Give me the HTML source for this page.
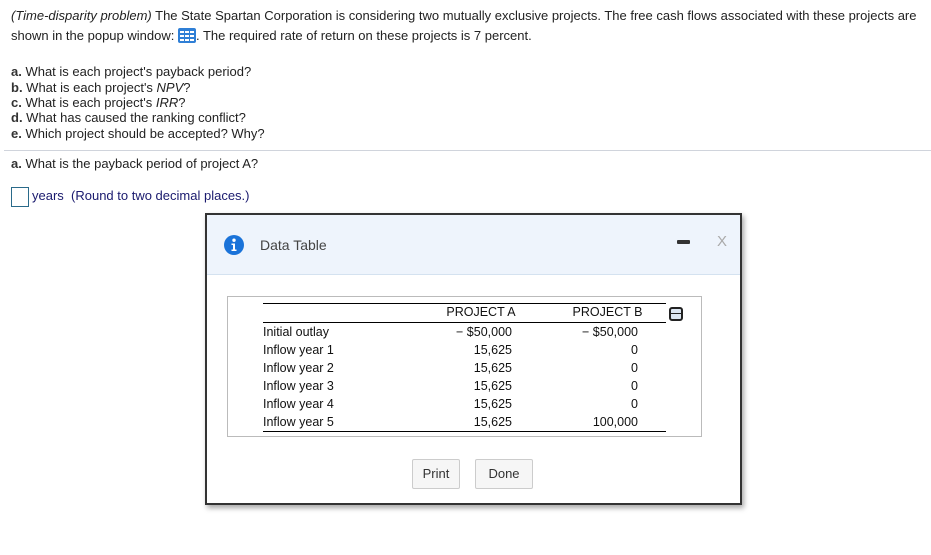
<!DOCTYPE html>
<html><head><style>
body{margin:0;width:931px;height:555px;background:#fff;font-family:"Liberation Sans",Arial,sans-serif;font-size:13px;color:#222;position:relative;overflow:hidden}
.a{position:absolute;white-space:nowrap}
b{font-weight:bold;color:#333}
.dlg{position:absolute;left:205px;top:213px;width:533px;height:288px;border:2px solid #333;background:#fff;box-shadow:2px 3px 5px rgba(0,0,0,.35)}
.hdr{position:absolute;left:0;top:0;width:533px;height:59px;background:#eef4fc;border-bottom:1px solid #d4e2f0}
.box{position:absolute;left:20px;top:81px;width:473px;height:139px;border:1px solid #bbb}
.ln{position:absolute;left:35px;width:403px;background:#000;height:1px}
.r{position:absolute;text-align:right;white-space:nowrap}
.btn{position:absolute;top:244px;height:28px;border:1px solid #ccc;border-radius:2px;background:#f6f6f6;font-size:13px;color:#333;text-align:center;line-height:28px}
</style></head><body>
<div class="a" style="left:11px;top:8px"><i>(Time-disparity problem)</i> The State Spartan Corporation is considering two mutually exclusive projects. The free cash flows associated with these projects are</div>
<div class="a" style="left:11px;top:28px">shown in the popup window: <svg width="18" height="15" viewBox="0 0 18 15" style="vertical-align:-3px"><rect x="0" y="0" width="18" height="15" rx="2" fill="#2f7fd6"/><g fill="#fff"><rect x="2" y="3" width="4" height="2"/><rect x="7" y="3" width="4" height="2"/><rect x="12" y="3" width="4" height="2"/><rect x="2" y="7" width="4" height="2"/><rect x="7" y="7" width="4" height="2"/><rect x="12" y="7" width="4" height="2"/><rect x="2" y="11" width="4" height="2"/><rect x="7" y="11" width="4" height="2"/><rect x="12" y="11" width="4" height="2"/></g></svg>. The required rate of return on these projects is 7 percent.</div>
<div class="a" style="left:11px;top:64px"><b>a.</b> What is each project's payback period?</div>
<div class="a" style="left:11px;top:80px"><b>b.</b> What is each project's <i>NPV</i>?</div>
<div class="a" style="left:11px;top:95px"><b>c.</b> What is each project's <i>IRR</i>?</div>
<div class="a" style="left:11px;top:110px"><b>d.</b> What has caused the ranking conflict?</div>
<div class="a" style="left:11px;top:126px"><b>e.</b> Which project should be accepted? Why?</div>
<div class="a" style="left:4px;top:150px;width:927px;height:1px;background:#d0d4dc"></div>
<div class="a" style="left:11px;top:156px"><b>a.</b> What is the payback period of project A?</div>
<div class="a" style="left:11px;top:187px;width:16px;height:18px;border:1px solid #2a6a8a"></div>
<div class="a" style="left:32px;top:188px;color:#1a1a6e">years &nbsp;(Round to two decimal places.)</div>
<div class="dlg">
<div class="hdr">
<svg style="position:absolute;left:17px;top:20px" width="20" height="20" viewBox="0 0 20 20"><circle cx="10" cy="10" r="10" fill="#1a73d9"/><circle cx="10" cy="5.2" r="1.7" fill="#fff"/><path d="M7.5 8.5h3.5v6h1.5v1.5h-5v-1.5h1.5v-4.5h-1.5z" fill="#fff"/></svg>
<div class="a" style="left:53px;top:22px;font-size:14px;color:#444">Data Table</div>
<div class="a" style="left:470px;top:25px;width:13px;height:4px;background:#333;border-radius:1px"></div>
<div class="a" style="left:510px;top:18px;font-size:15px;color:#aaa">X</div>
</div>
<div class="box">
<div class="ln" style="top:6px"></div>
<div class="ln" style="top:25px"></div>
<div class="ln" style="top:134px"></div>
<div class="r" style="left:208px;width:90px;top:8px;text-align:center;font-size:12.5px;color:#111">PROJECT A</div>
<div class="r" style="left:332px;width:95px;top:8px;text-align:center;font-size:12.5px;color:#111">PROJECT B</div>
<div style="position:absolute;left:441px;top:10px;width:10px;height:10px;border:2px solid #222;border-radius:3px;background:#dce6f2"><div style="position:absolute;left:0;top:4px;width:10px;height:1px;background:#222"></div></div>
<div style="position:absolute;left:35px;top:26px;line-height:18px;font-size:12.5px;color:#111">Initial outlay<br>Inflow year 1<br>Inflow year 2<br>Inflow year 3<br>Inflow year 4<br>Inflow year 5</div>
<div class="r" style="left:200px;width:84px;top:26px;line-height:18px;font-size:12.5px;color:#111">− $50,000<br>15,625<br>15,625<br>15,625<br>15,625<br>15,625</div>
<div class="r" style="left:320px;width:90px;top:26px;line-height:18px;font-size:12.5px;color:#111">− $50,000<br>0<br>0<br>0<br>0<br>100,000</div>
</div>
<div class="btn" style="left:205px;width:46px">Print</div>
<div class="btn" style="left:268px;width:56px">Done</div>
</div>
</body></html>
